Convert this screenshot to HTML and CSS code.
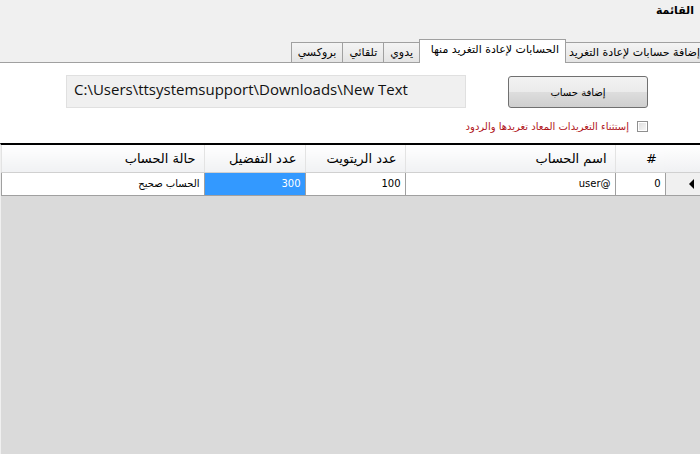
FILE: index.html
```html
<!DOCTYPE html>
<html lang="ar" dir="rtl">
<head>
    <meta charset="UTF-8">
    <title>القائمة</title>
    <link rel="stylesheet" href="styles.css">
</head>
<body>

    <div class="menu-title">القائمة</div>

    <div class="tabs">
        <div class="tab first">إضافة حسابات لإعادة التغريد</div>
        <div class="tab active">الحسابات لإعادة التغريد منها</div>
        <div class="tab">يدوي</div>
        <div class="tab">تلقائي</div>
        <div class="tab">بروكسي</div>
    </div>

    <div class="panel">
        <div class="panel-row">
            <button type="button" class="btn">إضافة حساب</button>
            <div class="path-box" dir="ltr">C:\Users\ttsystemsupport\Downloads\New Text</div>
        </div>
        <label class="check-row">
            <span class="check"></span>
            <span class="check-label">إستثناء التغريدات المعاد تغريدها والردود</span>
        </label>
    </div>

    <div class="grid">
        <table>
            <colgroup>
                <col class="c-head">
                <col class="c-num">
                <col class="c-name">
                <col class="c-rt">
                <col class="c-fav">
                <col>
            </colgroup>
            <thead>
                <tr>
                    <th class="row-head"></th>
                    <th>#</th>
                    <th>اسم الحساب</th>
                    <th>عدد الريتويت</th>
                    <th>عدد التفضيل</th>
                    <th>حالة الحساب</th>
                </tr>
            </thead>
            <tbody>
                <tr>
                    <td class="row-head"><span class="arrow"></span></td>
                    <td>0</td>
                    <td>@user</td>
                    <td>100</td>
                    <td class="selected">300</td>
                    <td>الحساب صحيح</td>
                </tr>
            </tbody>
        </table>
    </div>

</body>
</html>
```

FILE: styles.css
```css
html, body {
    height: 100%;
}
body {
    margin: 0;
    font-family: "DejaVu Sans", sans-serif;
    font-size: 11px;
    color: #000;
    background-color: #dadada;
    display: flex;
    flex-direction: column;
}
.menu-title {
    background-color: #f0f0f0;
    height: 26px;
    padding-right: 6px;
    padding-top: 4px;
    box-sizing: border-box;
    font-weight: bold;
    font-size: 11px;
}
.tabs {
    background-color: #f0f0f0;
    height: 37px;
    display: flex;
    align-items: flex-end;
    border-bottom: 1px solid #a0a0a0;
    box-sizing: border-box;
}
.tab {
    height: 20px;
    line-height: 19px;
    padding: 0 6px;
    border: 1px solid #a0a0a0;
    border-bottom: none;
    border-right: none;
    background: linear-gradient(#f4f4f4, #e4e4e4);
    box-sizing: border-box;
    white-space: nowrap;
    font-size: 11px;
}
.tab.first {
    width: 134px;
    padding-right: 0;
    border-left: none;
}
.tab.active {
    width: 147px;
    height: 24px;
    line-height: 20px;
    background: #fff;
    border-right: 1px solid #a0a0a0;
    margin-bottom: -1px;
}
.panel {
    background-color: #fff;
    height: 80px;
    padding-top: 12px;
    box-sizing: border-box;
}
.panel-row {
    display: flex;
    align-items: flex-start;
}
.btn {
    margin-right: 52px;
    margin-top: 1px;
    width: 140px;
    height: 32px;
    border: 1px solid #707070;
    border-radius: 3px;
    background: linear-gradient(#f2f2f2 0%, #ebebeb 50%, #dddddd 51%, #cfcfcf 100%);
    font-family: "DejaVu Sans", sans-serif;
    font-size: 10px;
    padding: 0;
}
.path-box {
    margin-right: 42px;
    width: 400px;
    height: 33px;
    background-color: #f0f0f0;
    border: 1px solid #e0e0e0;
    box-sizing: border-box;
    padding-left: 7px;
    font-family: "Open Sans", sans-serif;
    font-size: 15px;
    line-height: 27px;
    color: #111;
    white-space: nowrap;
    overflow: hidden;
}
.check-row {
    display: flex;
    align-items: center;
    margin-top: 13px;
    margin-right: 52px;
}
.check {
    width: 11px;
    height: 11px;
    border: 1px solid #8f8f8f;
    background: linear-gradient(135deg, #dcdcdc, #f8f8f8);
    box-sizing: border-box;
    outline: 1px solid #fff;
    outline-offset: -2px;
}
.check-label {
    margin-right: 8px;
    color: #b0151a;
    font-size: 10px;
}
.grid {
    border-top: 2px solid #000;
    flex: 1;
    border-left: 1px solid #f0f0f0;
}
table {
    border-collapse: collapse;
    table-layout: fixed;
    width: 100%;
}
col.c-head { width: 35px; }
col.c-num { width: 50px; }
col.c-name { width: 210px; }
col.c-rt { width: 100px; }
col.c-fav { width: 101px; }
th {
    height: 27px;
    padding: 0 8px;
    text-align: right;
    font-weight: normal;
    font-size: 13px;
    background: linear-gradient(#ffffff, #f0f1f3);
    border-left: 1px solid #e3e3e3;
    border-bottom: 1px solid #d0d0d0;
    box-sizing: border-box;
}
th.row-head {
    border-left: none;
}
td {
    height: 22px;
    padding: 0 4px;
    text-align: right;
    background-color: #fff;
    border: 1px solid #a0a0a0;
    font-size: 10px;
    white-space: nowrap;
}
td.row-head {
    background: #f0f0f0;
    border: none;
    border-bottom: 1px solid #a0a0a0;
    padding-right: 6px;
}
td.selected {
    background-color: #3399ff;
    color: #fff;
}
/* current-row marker */
.arrow {
    display: inline-block;
    width: 0;
    height: 0;
    border-top: 5px solid transparent;
    border-bottom: 5px solid transparent;
    border-right: 5px solid #000;
    vertical-align: middle;
}
```
